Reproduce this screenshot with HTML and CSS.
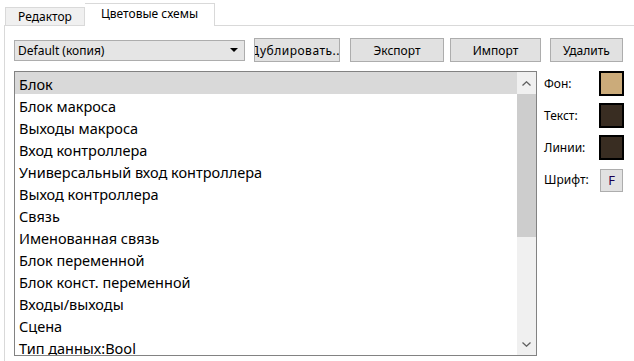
FILE: index.html
```html
<!DOCTYPE html>
<html>
<head>
  <meta charset="utf-8">
  <title>Цветовые схемы</title>
  <link rel="stylesheet" href="styles.css">
</head>
<body>
  <div class="window">
    <div class="tabs">
      <div class="tab">Редактор</div>
      <div class="tab active">Цветовые схемы</div>
    </div>
    <div class="pane">
      <div class="toolbar">
        <div class="combo">
          <span>Default (копия)</span>
          <svg class="combo-arrow" width="8" height="4" viewBox="0 0 8 4"><path d="M0 0h8L4 4z" fill="#000"/></svg>
        </div>
        <div class="btn btn-dup"><span>Дублировать...</span></div>
        <div class="btn btn-wide"><span>Экспорт</span></div>
        <div class="btn btn-wide"><span>Импорт</span></div>
        <div class="btn btn-del"><span>Удалить</span></div>
      </div>
      <div class="content">
        <div class="list">
          <ul class="items">
            <li class="selected">Блок</li>
            <li>Блок макроса</li>
            <li>Выходы макроса</li>
            <li>Вход контроллера</li>
            <li>Универсальный вход контроллера</li>
            <li>Выход контроллера</li>
            <li>Связь</li>
            <li>Именованная связь</li>
            <li>Блок переменной</li>
            <li>Блок конст. переменной</li>
            <li>Входы/выходы</li>
            <li>Сцена</li>
            <li>Тип данных:Bool</li>
          </ul>
          <div class="scrollbar">
            <div class="arrow">
              <svg width="9" height="5" viewBox="0 0 9 5"><path d="M0.5 4.5L4.5 0.8L8.5 4.5" fill="none" stroke="#606060" stroke-width="1.3"/></svg>
            </div>
            <div class="track">
              <div class="thumb"></div>
            </div>
            <div class="arrow">
              <svg width="9" height="5" viewBox="0 0 9 5"><path d="M0.5 0.5L4.5 4.2L8.5 0.5" fill="none" stroke="#606060" stroke-width="1.3"/></svg>
            </div>
          </div>
        </div>
        <div class="side">
          <div class="prop">
            <span class="label">Фон:</span>
            <span class="swatch swatch-bg"></span>
          </div>
          <div class="prop">
            <span class="label">Текст:</span>
            <span class="swatch swatch-dark"></span>
          </div>
          <div class="prop">
            <span class="label">Линии:</span>
            <span class="swatch swatch-dark"></span>
          </div>
          <div class="prop">
            <span class="label">Шрифт:</span>
            <span class="font-btn">F</span>
          </div>
        </div>
      </div>
    </div>
  </div>
</body>
</html>
```

FILE: styles.css
```css
/* Page */
body {
  margin: 0;
  background-color: #fff;
  font-family: 'Noto Sans', 'Liberation Sans', sans-serif;
  color: #000;
  overflow: hidden;
}

.window {
  width: 634px;
  height: 361px;
}

/* Tabs */
.tabs {
  display: flex;
  align-items: flex-end;
  height: 25px;
  padding-left: 5px;
}

.tab {
  box-sizing: border-box;
  height: 18px;
  width: 80px;
  border: 1px solid #d9d9d9;
  border-bottom: none;
  background-color: #f0f0f0;
  font-size: 12px;
  line-height: 17px;
  text-align: center;
}

.tab.active {
  height: 23px;
  width: 130px;
  background-color: #fff;
  border-left: none;
  margin-bottom: -1px;
  line-height: 19px;
  position: relative;
}

/* Pane */
.pane {
  margin-left: 4px;
  border-top: 1px solid #d9d9d9;
  border-left: 1px solid #d9d9d9;
  padding: 12px 0 0 9px;
  height: 330px;
}

.toolbar {
  display: flex;
  align-items: center;
  height: 24px;
}

.combo {
  box-sizing: border-box;
  width: 231px;
  height: 21px;
  border: 1px solid #adadad;
  background-color: #e5e5e5;
  display: flex;
  align-items: center;
  justify-content: space-between;
  padding: 0 6px 0 3px;
  font-size: 12px;
}

.btn {
  box-sizing: border-box;
  height: 24px;
  border: 1px solid #adadad;
  background-color: #e1e1e1;
  font-size: 12px;
  display: flex;
  align-items: center;
  justify-content: center;
  white-space: nowrap;
  overflow: hidden;
}

.btn span {
  flex-shrink: 0;
}

/* text is wider than the button, clipped on both sides */
.btn-dup {
  width: 86px;
  margin-left: 9px;
  letter-spacing: 0.5px;
}

.btn-wide {
  width: 94px;
  margin-left: 10px;
}

.btn-wide + .btn-wide {
  width: 91px;
  margin-left: 6px;
}

.btn-del {
  width: 73px;
  margin-left: 9px;
}

/* List */
.content {
  display: flex;
  margin-top: 9px;
}

.list {
  box-sizing: border-box;
  width: 523px;
  height: 285px;
  border: 1px solid #828282;
  display: flex;
  overflow: hidden;
}

.items {
  list-style: none;
  margin: 0;
  padding: 0;
  flex: 1;
  font-size: 14.5px;
}

.items li {
  box-sizing: border-box;
  height: 22px;
  line-height: 20px;
  padding: 2px 0 0 4px;
  white-space: nowrap;
}

.items li.selected {
  background-color: #d9d9d9;
}

.scrollbar {
  width: 19px;
  background-color: #f0f0f0;
  display: flex;
  flex-direction: column;
}

.arrow {
  height: 22px;
  display: flex;
  align-items: center;
  justify-content: center;
}

.track {
  flex: 1;
}

.thumb {
  height: 143px;
  background-color: #cdcdcd;
}

/* Side properties */
.side {
  margin-left: 7px;
  display: flex;
  flex-direction: column;
  gap: 7px;
}

.prop {
  display: flex;
  align-items: center;
  justify-content: space-between;
  width: 80px;
  height: 25px;
  font-size: 12px;
}

.swatch {
  box-sizing: border-box;
  width: 25px;
  height: 25px;
  border: 2px solid #000;
}

.swatch-bg {
  background-color: #cbab7a;
}

.swatch-dark {
  background-color: #392d22;
}

.font-btn {
  box-sizing: border-box;
  width: 23px;
  height: 23px;
  margin-right: 1px;
  margin-top: 1px;
  border: 1px solid #adadad;
  background-color: #e1e1e1;
  color: #1a0050;
  text-align: center;
  line-height: 21px;
  font-size: 13px;
}
```
